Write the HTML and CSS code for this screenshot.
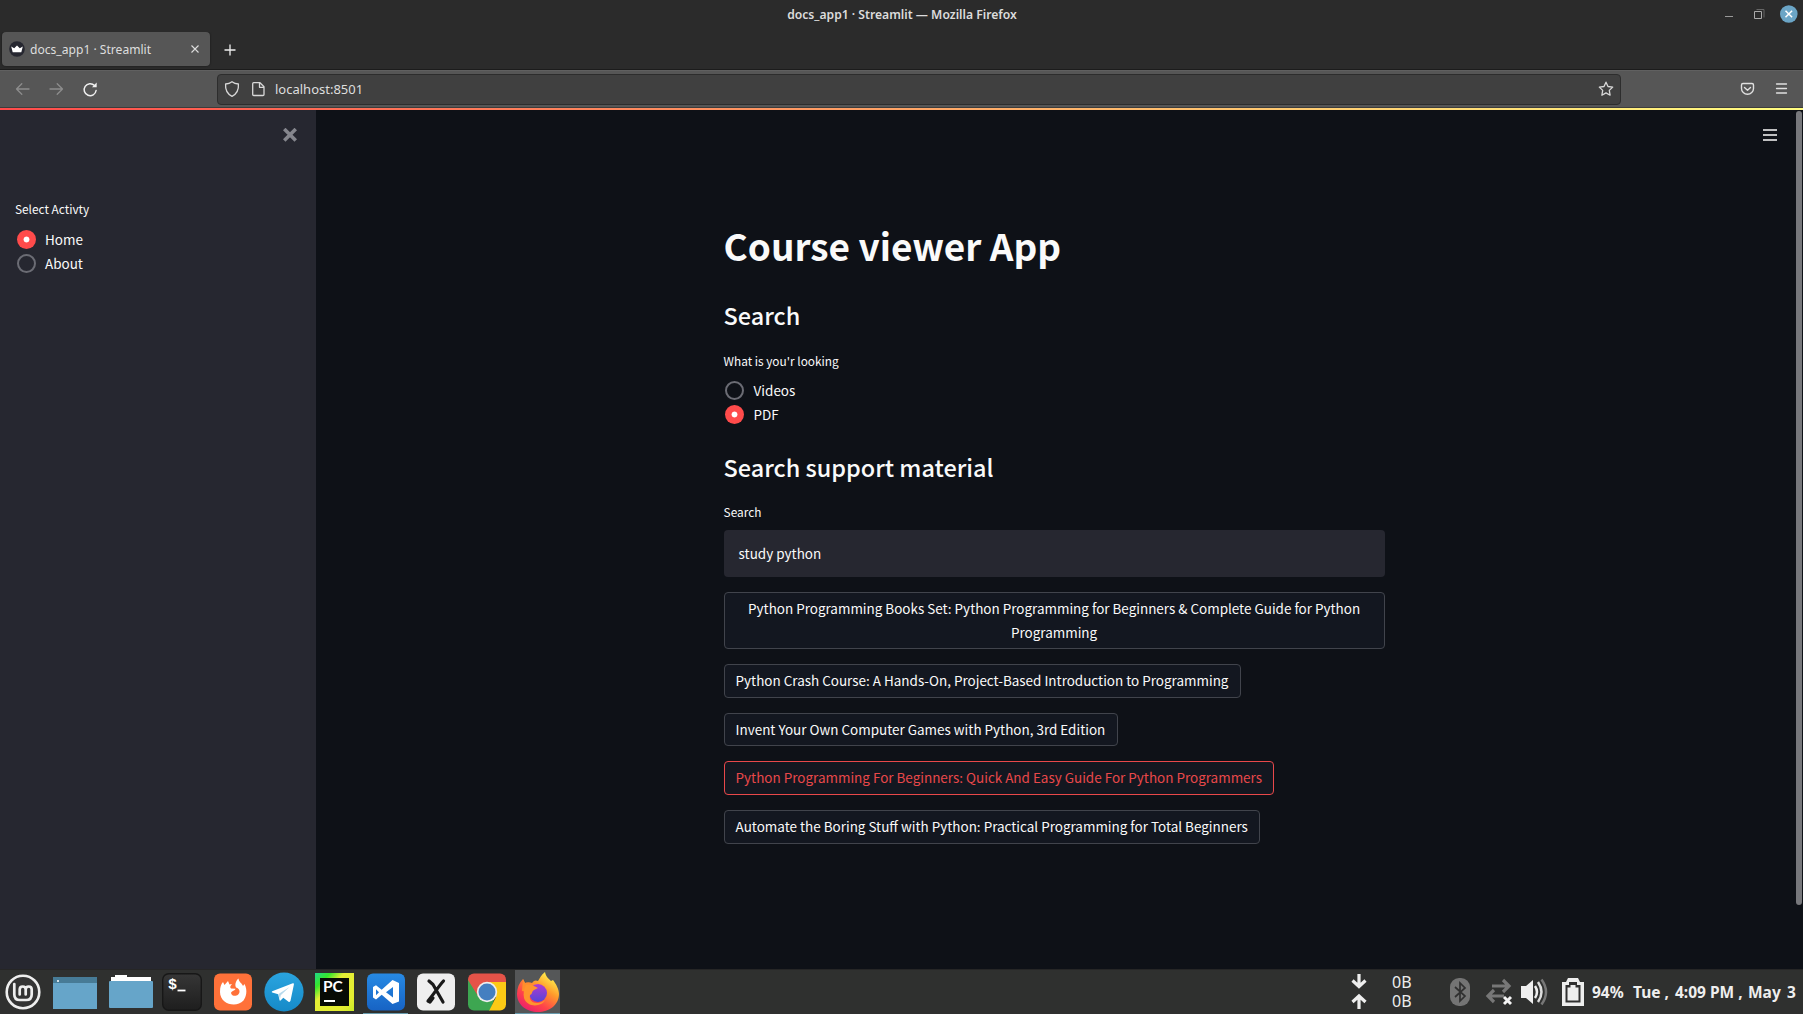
FILE: index.html
```html
<!DOCTYPE html>
<html lang="en">
<head>
<meta charset="utf-8">
<title>docs_app1 · Streamlit</title>
<link rel="stylesheet" href="styles.css">
</head>
<body>
<header class="titlebar">
  <span class="window-title">docs_app1 · Streamlit — Mozilla Firefox</span>
  <svg class="window-buttons" width="84" height="29" viewBox="0 0 84 29" fill="none">
    <path d="M6 16.500h8" stroke="#999" stroke-width="1"/>
    <path d="M35.500 11.500h7v7h-7z" stroke="#aaa"/><path d="M37.500 9.500h7.500v8" stroke="#666"/>
    <circle cx="69.800" cy="14" r="8.800" fill="#6ba5c6"/>
    <path d="M66.500 10.700l6.600 6.600m0-6.600l-6.600 6.600" stroke="#fff" stroke-width="1.500"/>
  </svg>
</header>
<nav class="tabs">
  <div class="tab">
    <svg width="16" height="16" viewBox="0 0 16 16"><circle cx="8" cy="8" r="7.800" fill="#262730"/><path d="M2.200 5.500l3 1.700L8 4.400l2.800 2.800 3-1.700-1.500 5.700H3.700z" fill="#fff"/></svg>
    <span class="tab-title">docs_app1 · Streamlit</span>
    <svg class="tab-close" width="8" height="8" viewBox="0 0 8 8"><path d="M.5.5l7 7m0-7l-7 7" stroke="#ddd" stroke-width="1.100"/></svg>
  </div>
  <svg class="tab-new" width="12" height="12" viewBox="0 0 12 12"><path d="M6 .5v11M.5 6h11" stroke="#eee" stroke-width="1.300"/></svg>
</nav>
<div class="toolbar">
  <svg class="nav-icons" width="217" height="38" viewBox="0 0 217 38" fill="none" stroke-linecap="round" stroke-linejoin="round">
    <g stroke="#8d8d8d" stroke-width="1.300"><path d="M29 19H16.500m5.300-5.300L16.500 19l5.300 5.300"/><path d="M50 19h12.500m-5.300-5.300l5.300 5.300-5.300 5.300"/></g>
    <path d="M94.500 15.500a6 6 0 1 0 1.600 5" stroke="#f0f0f0" stroke-width="1.500"/><path d="M96.700 12.500v4.800H92z" fill="#f0f0f0"/>
  </svg>
  <div class="address">
    <svg width="50" height="28" viewBox="0 0 50 28" fill="none" stroke="#d8d8d8" stroke-width="1.300" stroke-linejoin="round">
      <path d="M14 6.700c2 1.500 4 2.100 6.400 2.300.5 6-1.800 10-6.400 12.300C9.400 19 7.100 15 7.600 9c2.400-.2 4.400-.8 6.400-2.300z"/>
      <path d="M35.700 7.700H42l4 4v7.800q0 1-1 1h-9.300q-1 0-1-1V8.700q0-1 1-1zM41.500 8v4.300H46"/>
    </svg>
    <span class="url">localhost:8501</span>
    <svg class="star" width="16" height="16" viewBox="0 0 16 16" fill="none" stroke="#d8d8d8" stroke-width="1.300" stroke-linejoin="round"><path d="M8 1.200l2 4.300 4.700.6-3.400 3.300.8 4.800L8 11.900l-4.100 2.300.8-4.800L1.300 6.100 6 5.500z"/></svg>
  </div>
  <svg class="tools" width="50" height="16" viewBox="0 0 50 16" fill="none" stroke="#e0e0e0" stroke-linecap="round" stroke-linejoin="round">
    <path d="M3 2.500h9q1.500 0 1.500 1.500v3.500a6 5.800 0 0 1-12 0V4Q1.500 2.500 3 2.500zM4.500 6.500l3 2.800 3-2.800" stroke-width="1.400"/>
    <path d="M36.500 3h10M36.500 7.500h10M36.500 12h10" stroke-width="1.300"/>
  </svg>
</div>
<div class="decoration"></div>
<div class="app">
  <aside class="sidebar">
    <svg class="close" width="14" height="14" viewBox="0 0 14 14"><path d="M2.500 2.300l9 9m0-9l-9 9" stroke="#85868d" stroke-width="3.600" stroke-linecap="square"/></svg>
    <p class="label">Select Activty</p>
    <div class="radios">
      <label class="radio"><i class="dot on"></i>Home</label>
      <label class="radio"><i class="dot"></i>About</label>
    </div>
  </aside>
  <main class="main">
    <div class="content">
      <h1>Course viewer App</h1>
      <h2>Search</h2>
      <p class="label">What is you'r looking</p>
      <div class="radios">
        <label class="radio"><i class="dot"></i>Videos</label>
        <label class="radio"><i class="dot on"></i>PDF</label>
      </div>
      <h2 class="second">Search support material</h2>
      <p class="label">Search</p>
      <div class="field">study python</div>
      <div class="results">
        <button class="result wide">Python Programming Books Set: Python Programming for Beginners &amp; Complete Guide for Python<br>Programming</button>
        <button class="result r2">Python Crash Course: A Hands-On, Project-Based Introduction to Programming</button>
        <button class="result r3">Invent Your Own Computer Games with Python, 3rd Edition</button>
        <button class="result active">Python Programming For Beginners: Quick And Easy Guide For Python Programmers</button>
        <button class="result r5">Automate the Boring Stuff with Python: Practical Programming for Total Beginners</button>
      </div>
    </div>
    <svg class="menu" width="14" height="14" viewBox="0 0 14 14"><path d="M0 2h14M0 7h14M0 12h14" stroke="#fafafa" stroke-width="1.500"/></svg>
    <div class="scrollbar"></div>
  </main>
</div>
<footer class="taskbar">
  <div class="launchers">
    <svg width="38" height="38" viewBox="0 0 38 38" fill="none" stroke="#eee"><circle cx="19" cy="19" r="16.300" stroke-width="2.600" fill="#343434"/><path d="M10.300 11v10.500q0 5.500 5.500 5.500h6.400q5.500 0 5.500-5.500v-5q0-3-3-3t-3 3v5m0-5q0-3-3-3t-3 3v5" stroke-width="2.700" stroke-linecap="round"/></svg>
    <svg width="44" height="38" viewBox="0 0 44 38"><path fill="#66a5c9" d="M0 4h44v32H0z"/><path fill="#477b96" d="M0 4h44v6H0z"/><circle cx="5" cy="8" r="1" fill="#fff"/></svg>
    <svg width="44" height="38" viewBox="0 0 44 38"><path fill="#fff" d="M2 8V4h4V2h12v2h24v5z"/><rect y="8" width="44" height="27" rx="1" fill="#66a5c9"/></svg>
    <svg width="40" height="38" viewBox="0 0 40 38"><defs><linearGradient id="term" x2="0" y2="1"><stop stop-color="#363636"/><stop offset="1" stop-color="#1e1e1e"/></linearGradient></defs><rect x=".7" y=".7" width="38.600" height="36.600" rx="6" fill="url(#term)" stroke="#171717" stroke-width="1.400"/><text x="6" y="16" class="prompt">$</text><path d="M15.500 17.500h8" stroke="#fff" stroke-width="1.800"/></svg>
    <svg width="38" height="38" viewBox="0 0 38 38"><rect y=".5" width="38" height="37" rx="6" fill="#ff7139"/><path fill="#fff" d="M6 19c0-5 1-8 3-10l1.500 3L14 8l1.500 3.500L18 11c-1.500 1.500-2.500 3-1 4.500l4.500.3c-.5 2-4 2-4.500 4.200 1 4.500 8.500 3.500 8.500-1.500 0-2-1.500-3.500-3.500-4-1.500-3 0-7 2.500-9 .5 4 3.500 4.500 4.500 7.500l1.500-2C34 18 32 24 29.500 27.500 22 35.500 6 31 6 19z"/></svg>
    <svg width="40" height="40" viewBox="0 0 40 40"><defs><linearGradient id="tg" x2="0" y2="1"><stop stop-color="#2aa4df"/><stop offset="1" stop-color="#168ac8"/></linearGradient></defs><circle cx="20" cy="20" r="19.600" fill="url(#tg)"/><path fill="#fff" d="M8.200 19.200L28.800 11.300q1.400-.3 1.100 1.300l-3.400 16.200q-.6 1.700-2 .9l-5.200-3.900-2.800 2.700q-.8.7-1-.5l-1.300-5.800-6-1.800q-1.100-.5 0-1.200z"/><path d="M14.500 22l11-7-8.800 8.300-.7 4z" fill="#b6d9ec"/></svg>
    <svg width="39" height="38" viewBox="0 0 39 38"><defs><linearGradient id="pc" x2="1" y2="1"><stop stop-color="#20d88a"/><stop offset=".2" stop-color="#36e62b"/><stop offset=".38" stop-color="#e4ee35"/><stop offset=".8" stop-color="#e4ed31"/><stop offset="1" stop-color="#c8ea28"/></linearGradient></defs><path fill="url(#pc)" d="M0 0h39v38H0z"/><path fill="#070b05" d="M5 5h29v28H5z"/><text class="pc" x="8" y="19">PC</text><path d="M9 28h11" stroke="#fff" stroke-width="2"/></svg>
    <div class="running"><svg width="38" height="38" viewBox="0 0 38 38"><defs><linearGradient id="vs" x2="0" y2="1"><stop stop-color="#278ae4"/><stop offset="1" stop-color="#1763c4"/></linearGradient></defs><rect y=".5" width="38" height="37" rx="6" fill="url(#vs)"/><path fill="#fff" fill-rule="evenodd" d="M25.500 7L32 10v18.500L25.500 31 14.700 21.800 9 26.500l-3-2V14l3-1.800 5.700 4.600zM26 14l-7 5.300 7 5.200zM9 16.300v6l3-3z"/></svg></div>
    <svg width="38" height="38" viewBox="0 0 38 38"><rect y=".5" width="38" height="37" rx="6" fill="#eee"/><path d="M12 8l4 3.500L26 29M26.500 8C21 14 17 21 11 28l2 1 3-4" fill="none" stroke="#191919" stroke-width="3.200" stroke-linecap="round" stroke-linejoin="round"/></svg>
    <svg width="38" height="38" viewBox="0 0 38 38"><defs><clipPath id="sq"><rect y=".5" width="38" height="37" rx="6"/></clipPath></defs><g clip-path="url(#sq)"><path fill="#e55348" d="M0 0h38v12H19L10 24 0 9z"/><path fill="#3da651" d="M0 7l10 16 16 4-4 11H0z"/><path fill="#fcca15" d="M19 9h19v29H21l7-14z"/></g><circle cx="19" cy="19" r="10.200" fill="#eee"/><circle cx="19" cy="19" r="8.500" fill="#447fc0"/></svg>
    <div class="running focused"><svg width="44" height="42" viewBox="0 0 44 42"><defs><linearGradient id="ff" x1=".9" y1="0" x2=".2" y2="1"><stop offset=".1" stop-color="#fff04d"/><stop offset=".4" stop-color="#ff9a2b"/><stop offset=".7" stop-color="#ff4549"/><stop offset="1" stop-color="#e91b6f"/></linearGradient><linearGradient id="ffp" x2="0" y2="1"><stop stop-color="#b13bd0"/><stop offset="1" stop-color="#5545d8"/></linearGradient></defs><path fill="url(#ff)" d="M1 23C1 17 3 12 7 8l2 4c2-1 5-1 7 0 2-3 4-3 6-2 2-3 3-6 7-9 1 5 3 6 6 9l2-1c3 4 6 9 6 14 0 11-10 18-21 18S1 34 1 23z"/><path fill="#ff8d2d" d="M7 8l2 4c4-1 7 1 10 4l-6 5-7-1z"/><circle cx="22" cy="22" r="9" fill="url(#ffp)"/><path fill="#ff952d" d="M10 14c5-1 8 1 12 3l-4 2c-3 2-1 4-4 5-2 9 10 10 15 5-3 7-18 8-21-2-1-5 0-9 2-13z"/></svg></div>
  </div>
  <div class="tray">
    <svg class="net" width="16" height="36" viewBox="0 0 16 36" fill="none" stroke="#eee" stroke-width="3.200"><path d="M8 0v12M1.500 6.500L8 12.500l6.500-6M8 35V22M1.500 28L8 22l6.500 6"/></svg>
    <div class="rates"><span>0B</span><span>0B</span></div>
    <svg class="bt" width="20" height="30" viewBox="0 0 20 30"><rect y="1" width="20" height="28" rx="9" fill="#747474"/><path d="M5 10l10 9-5 5V6l5 5-10 9" fill="none" stroke="#303030" stroke-width="1.700"/></svg>
    <svg class="link" width="28" height="30" viewBox="0 0 28 30"><g fill="none" stroke="#777" stroke-width="3.200"><path d="M7 9h17M18 3l6 6-6 6M19 19H3m6-6l-6 6 6 6"/></g><path d="M19 20l7 7m0-7l-7 7" stroke="#303030" stroke-width="5"/><path d="M19 20l7 7m0-7l-7 7" stroke="#f4f4f4" stroke-width="2.900"/></svg>
    <svg class="volume" width="28" height="30" viewBox="0 0 28 30"><path d="M0 9h5l7-6v24l-7-6H0z" fill="#eee"/><g fill="none" stroke-width="2.500"><path d="M14 9q4 6 0 12" stroke="#eee"/><path d="M17 5q7 10 0 20" stroke="#ddd"/><path d="M20.500 2.500q9 12.500 0 25" stroke="#777"/></g></svg>
    <svg class="battery" width="22" height="30" viewBox="0 0 22 30"><path fill="#eee" d="M0 5h4l2-4h10l2 4h4v24H0z"/><path fill="#303030" d="M3.500 8H7V5h8v3h3.500v17.500h-15z"/><path fill="#eee" d="M5.500 10.500h3V8h5v2.500h3v13h-11z"/></svg>
    <span class="percent">94%</span><span class="day">Tue ,</span><span class="time">4:09 PM ,</span><span class="month">May</span><span>3</span>
  </div>
</footer>
</body>
</html>
```
FILE: styles.css
```css
* { box-sizing: border-box; }
body { margin: 0; width: 1803px; height: 1014px; overflow: hidden; display: flex; flex-direction: column; background: #0e1117; color: #fafafa; font-family: "Noto Sans CJK JP", "Noto Sans", sans-serif; }
svg { display: block; flex: none; }
h1, h2, p { margin: 0; white-space: nowrap; }

.titlebar { height: 32px; flex: none; background: #2b2b2b; position: relative; text-align: center; font: 600 12.150px/29px "Noto Sans", sans-serif; color: #dcdcdc; padding-left: 1px; }
.window-buttons { position: absolute; right: 0; top: 0; }
.tabs { height: 38px; flex: none; background: #2b2b2b; border-bottom: 1px solid #1c1c1c; display: flex; align-items: flex-start; padding-left: 2px; font: 12.100px/34px "Noto Sans", sans-serif; color: #dedede; }
.tab { width: 208px; height: 34px; border-radius: 4px; background: #565656; box-shadow: 0 0 2px #161616; display: flex; align-items: center; padding: 0 11px 0 7px; gap: 5px; }
.tab-title { padding-top: 1px; }
.tab-close { margin-left: auto; }
.tab-new { margin: 12px 0 0 14px; }
.toolbar { height: 38px; flex: none; background: #565656; border-top: 1px solid #606060; border-bottom: 1px solid #3c3c3c; display: flex; align-items: center; }
.address { width: 1404px; height: 31px; border: 1px solid #2d2d2d; border-radius: 4px; background: #404040; display: flex; align-items: center; padding-right: 6px; }
.url { margin-left: 7px; font: 13px/28px "Noto Sans", sans-serif; color: #dedede; }
.star { margin-left: auto; }
.tools { margin-left: 119px; }
.nav-icons { margin-top: -1px; }
.decoration { height: 2px; flex: none; background: linear-gradient(90deg, #ff4b4b, #fffd80); }

.app { height: 859px; flex: none; display: flex; }
.sidebar { width: 316px; flex: none; background: #262730; padding: 18px 19.500px 0 15px; display: flex; flex-direction: column; }
.close { align-self: flex-end; }
.sidebar .label { margin-top: 57px; }
.sidebar .radios { margin-top: 8px; }
.label { font-size: 11.850px; line-height: 20px; }
.radios { margin-top: 7px; }
.radio { height: 24px; display: flex; align-items: center; gap: 9px; padding-left: 2px; font-size: 13.470px; line-height: 24px; }
.main .radio { padding-left: 1.300px; gap: 9.700px; }
.dot { width: 19px; height: 19px; border-radius: 50%; border: 2px solid #6b6c74; }
.dot.on { border: 0; background: radial-gradient(circle, #fff 2.600px, #ff4b4b 3.300px); }
.main { flex: 1; position: relative; background: #0e1117; padding-left: 407.600px; }
.menu { position: absolute; right: 26px; top: 18px; }
.scrollbar { position: absolute; right: 1px; top: 1px; width: 6px; height: 794px; border-radius: 3px; background: #77787c; }
.content { width: 661px; padding-top: 110px; }
h1 { font-size: 36.950px; line-height: 50px; font-weight: 700; }
h2 { font-size: 23.450px; line-height: 32px; font-weight: 500; margin: 29px 0 20px; }
h2.second { margin: 25px 0 19px; }
.field { height: 47px; margin-top: 8px; border-radius: 4px; background: #262730; padding-left: 15px; font-size: 13.470px; line-height: 47px; }
.results { display: flex; flex-direction: column; align-items: flex-start; gap: 15px; margin-top: 15px; }
.result { border: 1px solid #41444c; border-radius: 4px; background: #131720; color: #fafafa; font: 13.460px/24px "Noto Sans CJK JP", sans-serif; padding: 3px 0 5px 11px; height: 33.700px; text-align: left; white-space: nowrap; }
.wide { width: 661px; height: 57px; text-align: center; padding: 2px 0 4px; }
.r2 { width: 517px; }
.r3 { width: 394px; }
.r5 { width: 536px; }
.active { width: 550px; border-color: #e8484a; color: #e8484a; }

.taskbar { height: 45px; flex: none; background: #2f302f; display: flex; justify-content: space-between; border-top: 1px solid #262626; }
.launchers { display: grid; grid-template-columns: 45px 60px 52px repeat(8, 50.800px); justify-items: center; align-items: center; height: 44px; }
.running { width: 45px; height: 44px; display: flex; align-items: center; justify-content: center; border-bottom: 1px solid #679aad; }
.focused { background: #555758; }
.prompt { font: 700 15px "Liberation Mono", monospace; fill: #fff; }
.pc { font: 700 15.500px Lato, sans-serif; fill: #fff; }
.tray { width: 452px; display: flex; align-items: center; font: 700 15.500px/44px "Noto Sans", sans-serif; color: #eee; white-space: nowrap; }
.rates { display: flex; flex-direction: column; width: 58px; margin-left: 25px; font-weight: 400; font-size: 16px; line-height: 19.500px; }
.bt { margin-right: 15px; }
.link { margin-right: 8px; }
.volume { margin-right: 13px; }
.battery { margin-right: 8px; }
.percent { width: 41px; }
.day { width: 42px; }
.time { width: 73px; }
.month { width: 39px; }
```
